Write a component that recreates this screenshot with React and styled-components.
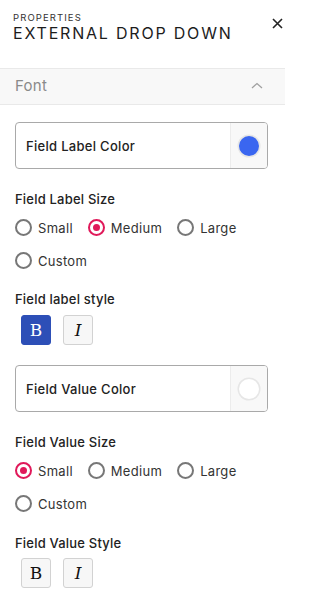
import React from 'react';
import styled, { createGlobalStyle } from 'styled-components';

const Global = createGlobalStyle`
  body {
    margin: 0;
    background: #fff;
    font-family: Inter, 'Noto Sans', sans-serif;
  }
`;

export default function App() {
  return (
    <>
      <Global />
      <Panel>
        <Header>
          <div>
            <Eyebrow>PROPERTIES</Eyebrow>
            <Title>EXTERNAL DROP DOWN</Title>
          </div>
          <Close aria-label="close">
            <svg width="11" height="11" viewBox="0 0 11 11">
              <path d="M1 1L10 10M10 1L1 10" stroke="#222" strokeWidth="1.6" />
            </svg>
          </Close>
        </Header>

        <SectionBar>
          <SectionName>Font</SectionName>
          <svg width="12" height="7" viewBox="0 0 12 7">
            <path d="M1 6L6 1.5L11 6" stroke="#a0a0a0" strokeWidth="1.3" fill="none" />
          </svg>
        </SectionBar>

        <Body>
          <ColorField>
            <ColorName>Field Label Color</ColorName>
            <Swatch>
              <Dot color="#3a66f0" />
            </Swatch>
          </ColorField>

          <Label>Field Label Size</Label>
          <RadioGroup>
            <Radio label="Small" />
            <Radio label="Medium" checked />
            <Radio label="Large" />
            <Radio label="Custom" />
          </RadioGroup>

          <Label $top={14}>Field label style</Label>
          <Styles>
            <StyleBtn $active>B</StyleBtn>
            <StyleBtn $italic>I</StyleBtn>
          </Styles>

          <ColorField $top={20}>
            <ColorName>Field Value Color</ColorName>
            <Swatch>
              <Dot color="#fff" />
            </Swatch>
          </ColorField>

          <Label>Field Value Size</Label>
          <RadioGroup>
            <Radio label="Small" checked />
            <Radio label="Medium" />
            <Radio label="Large" />
            <Radio label="Custom" />
          </RadioGroup>

          <Label $top={15}>Field Value Style</Label>
          <Styles $top={7}>
            <StyleBtn>B</StyleBtn>
            <StyleBtn $italic>I</StyleBtn>
          </Styles>
        </Body>
      </Panel>
    </>
  );
}

function Radio({ label, checked }) {
  return (
    <RadioItem>
      <RadioCircle $checked={checked} />
      <RadioText>{label}</RadioText>
    </RadioItem>
  );
}

const Panel = styled.div`
  width: 285px;
  color: #222;
`;

const Header = styled.div`
  display: flex;
  justify-content: space-between;
  align-items: flex-start;
  height: 68px;
  padding: 12px 0 0 13px;
  box-sizing: border-box;
`;

const Eyebrow = styled.div`
  font-size: 9.5px;
  letter-spacing: 1.1px;
  line-height: 12px;
  color: #333;
`;

const Title = styled.div`
  font-size: 16px;
  letter-spacing: 1.8px;
  line-height: 16px;
  margin-top: 1px;
  color: #1c1c1c;
`;

const Close = styled.div`
  margin: 6px 2px 0 0;
  width: 11px;
  height: 11px;
  display: flex;
`;

const SectionBar = styled.div`
  height: 37px;
  box-sizing: border-box;
  border-top: 1px solid #e9e9e9;
  border-bottom: 1px solid #e9e9e9;
  background: #f8f8f8;
  display: flex;
  align-items: center;
  justify-content: space-between;
  padding: 0 22px 2px 15px;
`;

const SectionName = styled.span`
  font-size: 15px;
  color: #8a8a8a;
  letter-spacing: 0.3px;
`;

const Body = styled.div`
  padding: 17px 17px 16px 15px;
  border-bottom: 1px solid #ececec;
`;

const ColorField = styled.div`
  height: 47px;
  box-sizing: border-box;
  margin-top: ${(p) => p.$top || 0}px;
  border: 1px solid #a9a9a9;
  border-radius: 4px;
  display: flex;
  align-items: stretch;
  overflow: hidden;
`;

const ColorName = styled.div`
  flex: 1;
  display: flex;
  align-items: center;
  padding-left: 10px;
  font-size: 13px;
  font-weight: 500;
  letter-spacing: 0.3px;
  color: #222;
`;

const Swatch = styled.div`
  width: 36px;
  background: #f8f8f8;
  border-left: 1px solid #ececec;
  display: flex;
  align-items: center;
  justify-content: center;
`;

const Dot = styled.span`
  width: 20px;
  height: 20px;
  border-radius: 50%;
  background: ${(p) => p.color};
  box-shadow: 0 0 0 1.5px #e6e6e6;
`;

const Label = styled.div`
  margin-top: ${(p) => p.$top ?? 22}px;
  font-size: 13px;
  font-weight: 500;
  line-height: 16px;
  letter-spacing: 0.2px;
  color: #222;
`;

const RadioGroup = styled.div`
  margin-top: 4px;
  display: flex;
  flex-wrap: wrap;
  column-gap: 15px;
  width: 260px;
`;

const RadioItem = styled.label`
  height: 33px;
  display: flex;
  align-items: center;
  gap: 6px;
`;

const RadioCircle = styled.span`
  width: 17px;
  height: 17px;
  box-sizing: border-box;
  border-radius: 50%;
  border: 2px solid ${(p) => (p.$checked ? '#e0195a' : '#777')};
  display: flex;
  align-items: center;
  justify-content: center;
  &::after {
    content: '';
    width: 7px;
    height: 7px;
    border-radius: 50%;
    background: ${(p) => (p.$checked ? '#e0195a' : 'transparent')};
  }
`;

const RadioText = styled.span`
  font-size: 13px;
  color: #333;
  letter-spacing: 0.3px;
`;

const Styles = styled.div`
  margin-top: ${(p) => p.$top ?? 8}px;
  padding-left: 6px;
  display: flex;
  gap: 12px;
`;

const StyleBtn = styled.div`
  width: 30px;
  height: 30px;
  box-sizing: border-box;
  border-radius: 3px;
  border: 1px solid ${(p) => (p.$active ? '#2d4fb7' : '#d2d2d2')};
  background: ${(p) => (p.$active ? '#2d4fb7' : '#f7f7f7')};
  color: ${(p) => (p.$active ? '#fff' : '#111')};
  display: flex;
  align-items: center;
  justify-content: center;
  font-family: 'DejaVu Serif', 'Liberation Serif', serif;
  font-size: 17px;
  font-style: ${(p) => (p.$italic ? 'italic' : 'normal')};
`;
